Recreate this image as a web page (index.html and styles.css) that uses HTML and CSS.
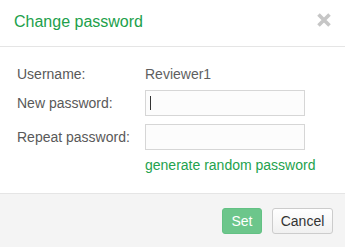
FILE: index.html
```html
<!DOCTYPE html>
<html>
<head>
<meta charset="utf-8">
<link rel="stylesheet" href="styles.css">
</head>
<body>
<div class="dialog">
  <div class="header">
    <div class="title">Change password</div>
    <svg class="close" width="16" height="16" viewBox="0 0 16 16"><path d="M2.5 2.5 L13.5 13.5 M13.5 2.5 L2.5 13.5" stroke="#c6c6c6" stroke-width="3.6" fill="none"/></svg>
  </div>
  <div class="content">
    <div class="form">
      <div class="label">Username:</div>
      <div class="value">Reviewer1</div>
      <div class="label mid">New password:</div>
      <div class="field"><input class="input" type="password"><span class="caret"></span></div>
      <div class="label mid">Repeat password:</div>
      <div class="field"><input class="input" type="password"></div>
      <div></div>
      <div class="link">generate random password</div>
    </div>
  </div>
  <div class="footer">
    <button class="btn btn-set">Set</button>
    <button class="btn btn-cancel">Cancel</button>
  </div>
</div>
</body>
</html>
```
FILE: styles.css
```css
html, body {
  margin: 0;
  padding: 0;
  background: #ffffff;
}
body {
  font-family: "Liberation Sans", Arial, sans-serif;
  font-size: 14px;
  color: #595959;
}
.dialog {
  width: 345px;
  height: 247px;
  display: flex;
  flex-direction: column;
}
.header {
  box-sizing: border-box;
  height: 47px;
  padding: 12px 13px 0 14px;
  border-bottom: 1px solid #e5e5e5;
  display: flex;
  justify-content: space-between;
  align-items: flex-start;
}
.title {
  font-size: 16px;
  line-height: 20px;
  color: #21a04b;
}
.close {
  display: block;
  margin-top: 0;
}
.content {
  padding: 17px 0 18px 17px;
}
.form {
  display: grid;
  grid-template-columns: 128px 160px;
  row-gap: 6px;
}
.label, .value {
  line-height: 20px;
}
.value {
  color: #5f5f5f;
}
.mid {
  align-self: center;
}
.form .label:nth-of-type(5) {
  margin-top: 2px;
}
.field {
  position: relative;
  height: 26px;
}
.field + .label + .field {
  margin-top: 2px;
}
.input {
  box-sizing: border-box;
  width: 160px;
  height: 26px;
  margin: 0;
  border: 1px solid #d6d6d6;
  background: #fcfcfc;
  padding: 0 4px;
  outline: none;
  font: inherit;
}
.caret {
  position: absolute;
  left: 5px;
  top: 6px;
  width: 1px;
  height: 14px;
  background: #333;
}
.link {
  line-height: 20px;
  color: #23a24d;
  margin-top: -1px;
  white-space: nowrap;
}
.footer {
  flex: 1;
  border-top: 1px solid #e5e5e5;
  background: #f4f4f4;
  display: flex;
  justify-content: flex-end;
  align-items: flex-start;
  gap: 10px;
  padding: 14px 12px 0 0;
}
.btn {
  box-sizing: border-box;
  height: 26px;
  margin: 0;
  font-family: "Liberation Sans", Arial, sans-serif;
  font-size: 14px;
  border-radius: 3px;
  padding: 0;
}
.btn-set {
  width: 40px;
  background: #6cc68b;
  border: 1px solid #63c184;
  color: #ffffff;
}
.btn-cancel {
  width: 61px;
  background: linear-gradient(#ffffff, #f0f0f0);
  border: 1px solid #cccccc;
  color: #333333;
}
```
